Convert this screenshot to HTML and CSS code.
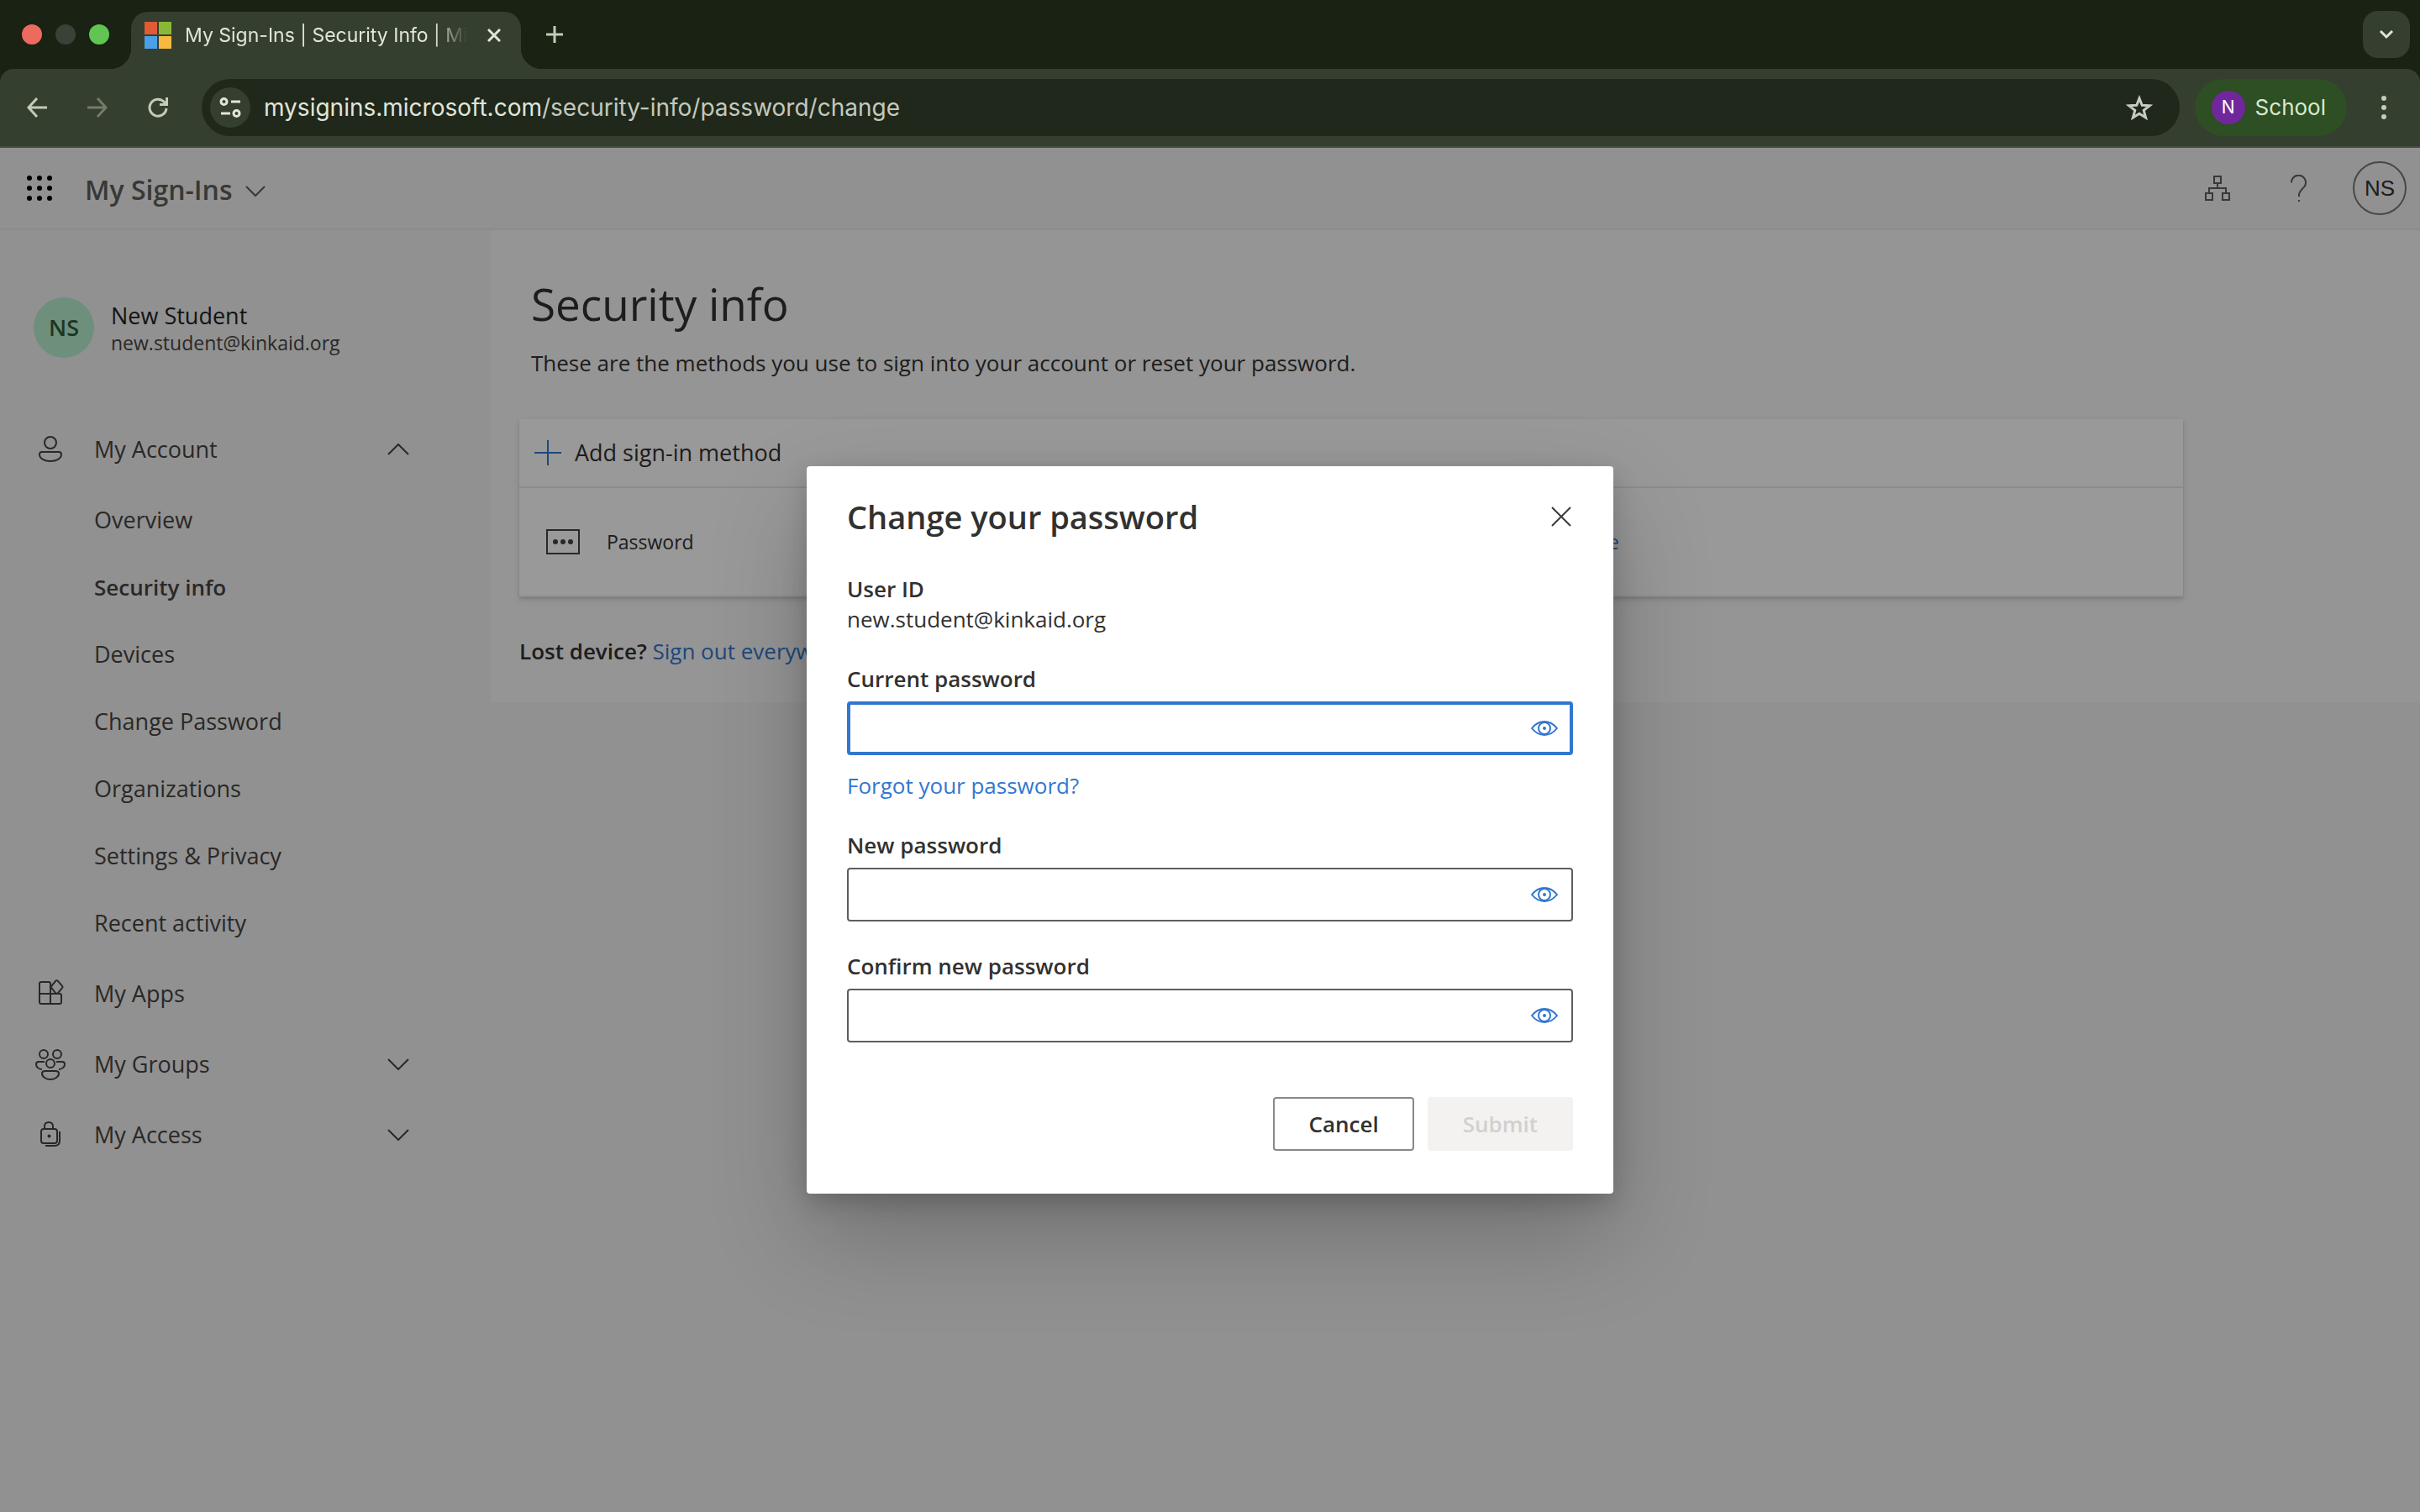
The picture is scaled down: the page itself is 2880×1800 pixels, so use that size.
FILE: index.html
```html
<!DOCTYPE html>
<html lang="en">
<head>
    <meta charset="utf-8">
    <title>My Sign-Ins | Security Info</title>
    <link rel="stylesheet" href="styles.css">
</head>
<body>

<div class="tabstrip">
    <div class="lights">
        <span class="light red"></span>
        <span class="light off"></span>
        <span class="light green"></span>
    </div>
    <div class="tab">
        <svg width="32" height="32" viewBox="0 0 32 32"><path fill="#e05b33" d="M0 0h15v15H0z"/><path fill="#8ab836" d="M17 0h15v15H17z"/><path fill="#4a9fe8" d="M0 17h15v15H0z"/><path fill="#f7b93e" d="M17 17h15v15H17z"/></svg>
        <span class="tab-title">My Sign-Ins | Security Info | Microsoft</span>
        <button class="plain" aria-label="Close tab"><svg width="16" height="16" viewBox="0 0 16 16" fill="none" stroke="#e1e5da" stroke-width="3"><path d="M1 1l14 14M15 1L1 15"/></svg></button>
    </div>
    <button class="plain new-tab" aria-label="New tab"><svg width="20" height="20" viewBox="0 0 20 20" stroke="#c2ccb6" stroke-width="3"><path d="M10 0v20M0 10h20"/></svg></button>
    <button class="plain tab-search" aria-label="Search tabs"><svg width="18" height="12" viewBox="0 0 18 12" fill="none" stroke="#e1e5da" stroke-width="3"><path d="M2 2l7 7 7-7"/></svg></button>
</div>

<div class="toolbar">
    <div class="nav-buttons">
        <button class="plain" aria-label="Back"><svg width="24" height="24" viewBox="0 0 24 24" fill="none" stroke="#c2ccb6" stroke-width="3"><path d="M24 12H2M12 1L2 12l10 11"/></svg></button>
        <button class="plain" aria-label="Forward"><svg width="24" height="24" viewBox="0 0 24 24" fill="none" stroke="#737c6a" stroke-width="3"><path d="M0 12h22M12 1l10 11-10 11"/></svg></button>
        <button class="plain" aria-label="Reload"><svg width="24" height="24" viewBox="0 0 24 24" fill="none" stroke="#c2ccb6" stroke-width="3"><path d="M22 13A10 10 0 1 1 19.500 5.500L22 8M22.500 0v8.500H14"/></svg></button>
    </div>
    <div class="address">
        <button class="plain site" aria-label="Site information"><svg width="26" height="24" viewBox="0 0 26 24" fill="none" stroke="#e1e5da" stroke-width="3"><circle cx="5.500" cy="5" r="3.500"/><path d="M14 5h11M2 19h11"/><circle cx="20.500" cy="19" r="3.500"/></svg></button>
        <span class="url">mysignins.microsoft.com<span class="path">/security-info/password/change</span></span>
        <button class="plain star" aria-label="Bookmark"><svg width="32" height="30" viewBox="0 0 32 30" fill="none" stroke="#c8cbc3" stroke-width="3"><path d="M16 4l3.200 8.300 9 .5-7 5.600 2.400 8.600L16 22.200 8.400 27l2.400-8.600-7-5.600 9-.5z"/></svg></button>
    </div>
    <button class="plain profile"><span class="profile-pic">N</span>School</button>
    <button class="plain menu" aria-label="Menu"><svg width="6" height="28" viewBox="0 0 6 28" fill="#c2ccb6"><circle cx="3" cy="3" r="3"/><circle cx="3" cy="14" r="3"/><circle cx="3" cy="25" r="3"/></svg></button>
</div>

<div class="page">
    <header class="header">
        <button class="plain waffle" aria-label="App launcher"><svg width="30" height="30" viewBox="0 0 30 30" fill="#000"><circle cx="3" cy="3" r="3"/><circle cx="15" cy="3" r="3"/><circle cx="27" cy="3" r="3"/><circle cx="3" cy="15" r="3"/><circle cx="15" cy="15" r="3"/><circle cx="27" cy="15" r="3"/><circle cx="3" cy="27" r="3"/><circle cx="15" cy="27" r="3"/><circle cx="27" cy="27" r="3"/></svg></button>
        <button class="plain app-name">My Sign-Ins <svg width="24" height="14" viewBox="0 0 24 14" fill="none" stroke="currentColor" stroke-width="2"><path d="M1 1l11 11L23 1"/></svg></button>
        <button class="plain org" aria-label="Organizations"><svg width="30" height="30" viewBox="0 0 30 30" fill="none" stroke="#605e5c" stroke-width="2"><path d="M11 1h8v8h-8zM1 21h8v8H1zM21 21h8v8h-8zM15 9v6M5 21v-6h20v6"/></svg></button>
        <button class="plain help" aria-label="Help"><svg width="20" height="32" viewBox="0 0 20 32" fill="none" stroke="#605e5c" stroke-width="2"><path d="M1 9.500a8.500 8.500 0 1 1 15 5.200C13 18 10 20 10 24v2M10 30v2"/></svg></button>
        <button class="plain me">NS</button>
    </header>

    <div class="columns">
        <nav class="sidebar">
            <div class="user">
                <span class="avatar">NS</span>
                <div>
                    <div class="user-name">New Student</div>
                    <div class="user-mail">new.student@kinkaid.org</div>
                </div>
            </div>
            <button class="plain item">
                <svg width="36" height="36" viewBox="0 0 36 36"><circle cx="18" cy="10" r="7"/><path d="M8 21h20c2 0 3 1 3 3 0 5-6 8-13 8S5 29 5 24c0-2 1-3 3-3z"/></svg>
                <span>My Account</span>
                <svg class="chevron" width="26" height="14" viewBox="0 0 26 14"><path d="M1 13L13 1l12 12"/></svg>
            </button>
            <div class="subitems">
                <a href="#">Overview</a>
                <a href="#" class="current">Security info</a>
                <a href="#">Devices</a>
                <a href="#">Change Password</a>
                <a href="#">Organizations</a>
                <a href="#">Settings &amp; Privacy</a>
                <a href="#">Recent activity</a>
            </div>
            <a href="#" class="item">
                <svg width="36" height="36" viewBox="0 0 36 36"><path d="M18 18V6c0-1-1-2-2-2H7C6 4 5 5 5 6v22c0 1 1 2 2 2h22c1 0 2-1 2-2v-8c0-1-1-2-2-2H5M18 18v12M24.300 2.700l-5 6.200c-.6.700-.6 1.500 0 2.200l5 6.200c.6.700 1.800.7 2.400 0l5.400-6.200c.6-.7.6-1.500 0-2.200l-5.400-6.200c-.6-.7-1.800-.7-2.400 0z"/></svg>
                <span>My Apps</span>
            </a>
            <button class="plain item">
                <svg width="36" height="38" viewBox="0 0 36 38"><circle cx="10" cy="7" r="5"/><circle cx="26" cy="7" r="5"/><circle cx="18" cy="18" r="5"/><path d="M12 27h12c3 0 4 1 4 3 0 4-5 7-10 7S8 34 8 30c0-2 1-3 4-3zM11 16H4c-2 0-3 1-3 3 0 3 3 6 7 6M25 16h7c2 0 3 1 3 3 0 3-3 6-7 6"/></svg>
                <span>My Groups</span>
                <svg class="chevron" width="26" height="14" viewBox="0 0 26 14"><path d="M1 1l12 12L25 1"/></svg>
            </button>
            <button class="plain item">
                <svg width="36" height="36" viewBox="0 0 36 36"><rect x="7" y="11" width="19" height="17" rx="3"/><path d="M11 11V8c0-3 2-5 5-5s5 2 5 5v3M29 14v11c0 4-2 6-6 6H12"/><circle cx="16.500" cy="19.500" r="1"/></svg>
                <span>My Access</span>
                <svg class="chevron" width="26" height="14" viewBox="0 0 26 14"><path d="M1 1l12 12L25 1"/></svg>
            </button>
        </nav>

        <main class="content">
            <h1>Security info</h1>
            <p class="intro">These are the methods you use to sign into your account or reset your password.</p>
            <div class="methods">
                <button class="plain add"><svg width="32" height="32" viewBox="0 0 32 32" stroke="#3277cf" stroke-width="2"><path d="M16 1v30M0 16h32"/></svg>Add sign-in method</button>
                <div class="method">
                    <svg width="40" height="30" viewBox="0 0 40 30" fill="none" stroke="#464442" stroke-width="2"><path d="M1 1h38v28H1z"/><g fill="#464442" stroke="none"><circle cx="11" cy="15" r="3"/><circle cx="20" cy="15" r="3"/><circle cx="29" cy="15" r="3"/></g></svg>
                    <span class="method-name">Password</span>
                    <a href="#">Change</a>
                </div>
            </div>
            <p class="lost"><b>Lost device?</b> <a href="#">Sign out everywhere</a></p>
        </main>
    </div>

    <div class="overlay">
        <form class="dialog" role="dialog" aria-labelledby="dialog-title">
            <div class="dialog-head">
                <h2 id="dialog-title">Change your password</h2>
                <button type="button" class="plain" aria-label="Close"><svg width="24" height="24" viewBox="0 0 24 24" stroke="#3b3a39" stroke-width="2"><path d="M1 1l22 22M23 1L1 23"/></svg></button>
            </div>
            <div class="field">
                <div class="label">User ID</div>
                <div>new.student@kinkaid.org</div>
            </div>
            <div class="field">
                <label for="current">Current password</label>
                <div class="box focused">
                    <input type="password" id="current">
                    <button type="button" class="plain" aria-label="Show password"><svg width="32" height="18" viewBox="0 0 32 18" fill="none" stroke="#3277cf" stroke-width="2"><path d="M1 9c4-5 9-8 15-8s11 3 15 8c-4 5-9 8-15 8S5 14 1 9z"/><circle cx="16" cy="9" r="7"/><circle cx="16" cy="9" r="1"/></svg></button>
                </div>
                <a href="#" class="forgot">Forgot your password?</a>
            </div>
            <div class="field">
                <label for="new">New password</label>
                <div class="box">
                    <input type="password" id="new">
                    <button type="button" class="plain" aria-label="Show password"><svg width="32" height="18" viewBox="0 0 32 18" fill="none" stroke="#3277cf" stroke-width="2"><path d="M1 9c4-5 9-8 15-8s11 3 15 8c-4 5-9 8-15 8S5 14 1 9z"/><circle cx="16" cy="9" r="7"/><circle cx="16" cy="9" r="1"/></svg></button>
                </div>
            </div>
            <div class="field">
                <label for="confirm">Confirm new password</label>
                <div class="box">
                    <input type="password" id="confirm">
                    <button type="button" class="plain" aria-label="Show password"><svg width="32" height="18" viewBox="0 0 32 18" fill="none" stroke="#3277cf" stroke-width="2"><path d="M1 9c4-5 9-8 15-8s11 3 15 8c-4 5-9 8-15 8S5 14 1 9z"/><circle cx="16" cy="9" r="7"/><circle cx="16" cy="9" r="1"/></svg></button>
                </div>
            </div>
            <div class="actions">
                <button type="button" class="cancel">Cancel</button>
                <button type="submit" class="submit" disabled>Submit</button>
            </div>
        </form>
    </div>
</div>

</body>
</html>
```
FILE: styles.css
```css
* { box-sizing: border-box; }
body { margin: 0; min-height: 100vh; display: flex; flex-direction: column; background: #192213; color: #323130; font-family: "Open Sans", sans-serif; font-size: 27px; line-height: 36px; }
h1, h2, p { margin: 0; }
a { color: #3277cf; text-decoration: none; }
svg { display: block; flex: none; }
button { font: inherit; color: inherit; margin: 0; }
.plain { border: 0; padding: 0; background: none; display: flex; align-items: center; justify-content: center; }

/* browser window */
.tabstrip { display: flex; align-items: center; height: 82px; padding: 0 12px 0 26px; font-family: Inter, sans-serif; }
.lights { display: flex; gap: 16px; width: 130px; }
.light { width: 24px; height: 24px; border-radius: 50%; }
.red { background: #ed6a5e; }
.off { background: #3a4237; }
.green { background: #61c554; }
.tab { position: relative; align-self: flex-end; display: flex; align-items: center; width: 464px; height: 68px; padding: 0 24px 12px 16px; border-radius: 20px 20px 0 0; background: #353f2f; }
.tab::before, .tab::after { content: ""; position: absolute; bottom: 0; width: 24px; height: 24px; }
.tab::before { right: 100%; background: radial-gradient(circle at 0 0, transparent 24px, #353f2f 24px); }
.tab::after { left: 100%; background: radial-gradient(circle at 100% 0, transparent 24px, #353f2f 24px); }
.tab-title { flex: 1; margin: 0 24px 0 16px; overflow: hidden; white-space: nowrap; font-size: 23px; color: #e1e5da; -webkit-mask-image: linear-gradient(to right, #000 88%, transparent); mask-image: linear-gradient(to right, #000 88%, transparent); }
.new-tab { margin-left: 30px; }
.tab-search { width: 56px; height: 56px; margin-left: auto; border-radius: 18px; background: #353f2f; }
.toolbar { display: flex; align-items: center; height: 94px; padding: 0 40px 0 32px; border-bottom: 2px solid #454c40; border-radius: 16px 16px 0 0; background: #353f2f; font-family: Inter, sans-serif; font-size: 28px; }
.nav-buttons { display: flex; gap: 48px; margin-right: 40px; }
.address { flex: 1; display: flex; align-items: center; height: 68px; padding: 0 32px 0 10px; border-radius: 34px; background: #1f281a; }
.site { width: 48px; height: 48px; border-radius: 50%; background: #353f2f; }
.url { flex: 1; margin-left: 16px; color: #e1e5da; }
.path { color: #c4c8bf; }
.profile { height: 68px; margin: 0 41px 0 18px; padding: 0 25px 0 20px; gap: 12px; border-radius: 34px; background: #2e4e23; color: #d9e8cd; font-size: 26px; }
.profile-pic { width: 40px; height: 40px; border-radius: 50%; background: #71279c; color: #fff; font-size: 21px; line-height: 40px; }

/* account portal */
.page { position: relative; flex: 1; display: flex; flex-direction: column; background: #f2f2f2; }
.header { display: flex; align-items: center; height: 98px; padding: 0 16px 0 32px; border-bottom: 2px solid #eaeaea; }
.app-name { margin: 4px auto 0 39px; gap: 16px; color: #605e5c; font-size: 32px; font-weight: 600; }
.app-name svg { margin-top: 4px; }
.org { margin-right: 72px; }
.help { margin-right: 54px; }
.me { width: 64px; height: 64px; border: 2px solid #797775; border-radius: 50%; color: #323130; font-family: "Liberation Sans", sans-serif; font-size: 26px; }
.columns { display: flex; align-items: flex-start; }
.sidebar { width: 584px; padding-top: 80px; color: #464442; }
.user { display: flex; align-items: center; gap: 20px; height: 72px; margin: 0 0 67px 40px; }
.avatar { width: 72px; height: 72px; border-radius: 50%; background: #b8eecf; color: #305d38; font-weight: 600; line-height: 72px; text-align: center; }
.user-name { padding-top: 4px; color: #201f1e; line-height: 32px; }
.user-mail { color: #464442; font-size: 23px; line-height: 32px; }
.item { display: flex; align-items: center; width: 100%; height: 84px; padding-left: 42px; color: inherit; }
.item span { flex: 1; margin-left: 34px; text-align: left; }
.item svg { fill: none; stroke: currentColor; stroke-width: 2; }
.item .chevron { margin-right: 97px; }
.subitems { padding: 2px 0; }
.subitems a { display: block; padding-left: 112px; color: inherit; line-height: 80px; }
.subitems .current { font-size: 26px; font-weight: 600; }
.content { flex: 1; min-height: 562px; padding: 52px 0 0 34px; background: #f8f8f8; }
h1 { padding-left: 14px; font-size: 53px; font-weight: 400; line-height: 72px; }
.intro { margin-top: 16px; padding-left: 14px; font-size: 26px; }
.methods { max-width: 1980px; margin-top: 49px; border-bottom: 2px solid #eaeaea; background: #fff; box-shadow: 0 3px 7px rgba(0,0,0,.13), 0 1px 2px rgba(0,0,0,.11); }
.add { height: 80px; padding-left: 18px; gap: 16px; }
.method { display: flex; align-items: center; height: 130px; padding-left: 32px; border-top: 2px solid #eaeaea; font-size: 23px; }
.method-name { width: 1124px; margin-left: 32px; }
.lost { margin-top: 46px; font-size: 26px; }
.lost b { font-weight: 600; }

/* change password */
.overlay { position: absolute; inset: 0; display: flex; align-items: center; justify-content: center; background: rgba(0,0,0,.4); }
.dialog { width: 960px; padding: 36px 48px 51px; border-radius: 4px; background: #fff; box-shadow: 0 51px 115px rgba(0,0,0,.22), 0 10px 29px rgba(0,0,0,.18); font-size: 26px; }
.dialog-head { display: flex; align-items: center; justify-content: space-between; margin-bottom: 44px; padding-right: 2px; }
h2 { font-size: 38px; font-weight: 600; line-height: 48px; }
.field { margin-bottom: 35px; }
.label, label { display: block; font-weight: 600; }
.box { display: flex; align-items: center; height: 64px; margin-top: 9px; padding-right: 16px; border: 2px solid #605e5c; border-radius: 4px; }
.box.focused { padding-right: 14px; border: 4px solid #3277cf; }
.box input { flex: 1; height: 100%; border: 0; padding: 0 16px; outline: 0; background: none; font: inherit; }
.forgot { display: block; margin-top: 18px; }
.actions { display: flex; justify-content: flex-end; gap: 16px; margin-top: 65px; font-weight: 600; }
.cancel, .submit { height: 64px; padding: 0 40px; border: 2px solid #8a8886; border-radius: 4px; background: #fff; }
.submit { border-color: #f3f2f1; background: #f3f2f1; color: #d2d0ce; }
```
